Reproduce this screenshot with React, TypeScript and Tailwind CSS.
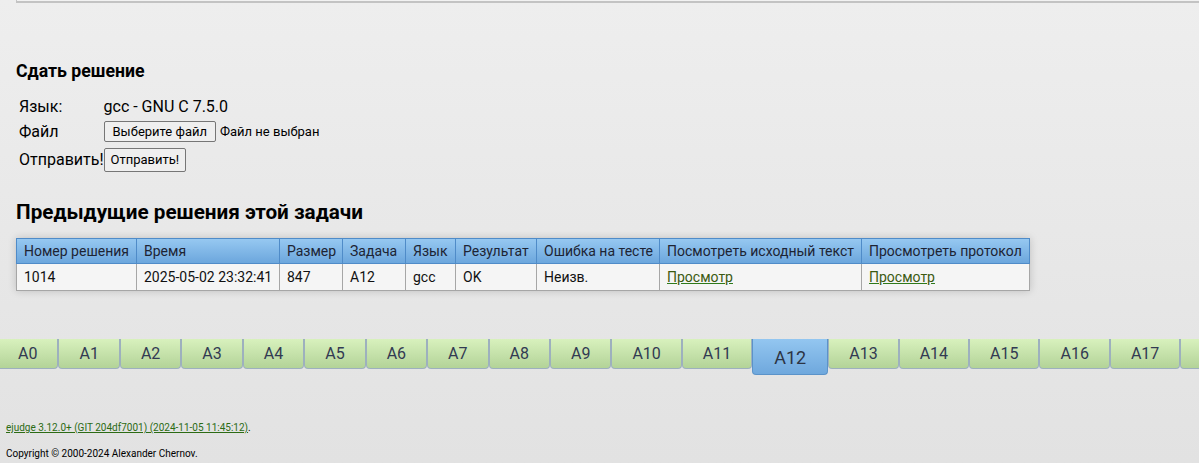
const cols = [
  { title: "Номер решения", w: "w-[120px]", value: "1014" },
  { title: "Время", w: "w-[143px]", value: "2025-05-02 23:32:41" },
  { title: "Размер", w: "w-[63px]", value: "847" },
  { title: "Задача", w: "w-[63px]", value: "A12" },
  { title: "Язык", w: "w-[50px]", value: "gcc" },
  { title: "Результат", w: "w-[81px]", value: "OK" },
  { title: "Ошибка на тесте", w: "w-[123px]", value: "Неизв." },
  { title: "Посмотреть исходный текст", w: "w-[202px]", value: "Просмотр", link: true },
  { title: "Просмотреть протокол", w: "w-[168px]", value: "Просмотр", link: true },
];

const problems = Array.from({ length: 19 }, (_, i) => `A${i}`);

function ProblemTabs() {
  return (
    <div className="flex w-full overflow-hidden whitespace-nowrap">
      <div className="ml-[-3px] flex items-start">
        {problems.map((p) =>
          p === "A12" ? (
            <div
              key={p}
              className="flex h-[36px] items-center rounded-b-[4px] border border-t-0 border-[#5b93c9] bg-gradient-to-b from-[#93c6f0] to-[#6fa8dd] px-[21px] pt-[2px] text-[18px] text-[#2d3444]"
            >
              {p}
            </div>
          ) : (
            <div
              key={p}
              className="flex h-[30px] items-center rounded-b-[4px] border border-t-0 border-[#9db0be] bg-gradient-to-b from-[#d8f1bd] to-[#b3d398] px-[20px] text-[16px] text-[#323a52]"
            >
              {p}
            </div>
          )
        )}
      </div>
    </div>
  );
}

export default function App() {
  return (
    <div className="h-[463px] w-full overflow-hidden bg-gradient-to-b from-[#eeeeee] to-[#e2e2e2] font-['Roboto',sans-serif] text-black">
      <div className="ml-4 h-[3px] border-b-2 border-l border-[#c3c3c3] bg-[#f2f2f2]" />

      <div className="px-4">
        <h3 className="mt-[58px] text-[17.7px] leading-[21px] font-bold">Сдать решение</h3>

        <table className="mt-[12px] border-separate border-spacing-x-0 border-spacing-y-[2px] text-[16px] leading-[19px]">
          <tbody>
            <tr className="h-[21px]">
              <td className="py-px pl-[3px]">Язык:</td>
              <td className="py-px">gcc - GNU C 7.5.0</td>
            </tr>
            <tr className="h-[25px]">
              <td className="py-px pl-[3px]">Файл</td>
              <td className="py-px">
                <div className="flex items-center gap-[4px]">
                  <button className="h-[21px] rounded-[2px] border border-[#767676] bg-[#efefef] px-[8px] text-[13px] leading-none">
                    Выберите файл
                  </button>
                  <span className="text-[13px]">Файл не выбран</span>
                </div>
              </td>
            </tr>
            <tr className="h-[27px]">
              <td className="py-px pl-[3px]">Отправить!</td>
              <td className="p-0">
                <button className="h-[24px] rounded-[2px] border border-[#767676] bg-[#efefef] px-[6px] text-[13px] leading-none">
                  Отправить!
                </button>
              </td>
            </tr>
          </tbody>
        </table>

        <h2 className="mt-[25px] text-[20.7px] leading-[24px] font-bold">Предыдущие решения этой задачи</h2>

        <table className="mt-[14px] w-[1013px] table-fixed border-collapse text-[14px] shadow-[0_0_8px_rgba(0,0,0,0.18)]">
          <thead>
            <tr className="h-[25px] bg-gradient-to-b from-[#96c8f1] to-[#6aa5dc]">
              {cols.map((c) => (
                <th
                  key={c.title}
                  className={`${c.w} overflow-hidden border border-[#4f8bc8] px-[7px] text-left font-normal whitespace-nowrap text-[#1d2434]`}
                >
                  {c.title}
                </th>
              ))}
            </tr>
          </thead>
          <tbody>
            <tr className="h-[27px] bg-[#f5f5f5]">
              {cols.map((c) => (
                <td key={c.title} className="border border-[#a6a6a6] px-[7px] whitespace-nowrap text-[#111]">
                  {c.link ? (
                    <a href="#" className="text-[#3c5a12] underline decoration-[#2e7a1a]">
                      {c.value}
                    </a>
                  ) : (
                    c.value
                  )}
                </td>
              ))}
            </tr>
          </tbody>
        </table>
      </div>

      <div className="mt-[48px]">
        <ProblemTabs />
      </div>

      <div className="mt-[47px] px-[6px] text-[10px] leading-[12px]">
        <p>
          <a href="#" className="text-[#2c6b14] underline">
            ejudge 3.12.0+ (GIT 204df7001) (2024-11-05 11:45:12)
          </a>
          .
        </p>
        <p className="mt-[14px]">Copyright © 2000-2024 Alexander Chernov.</p>
      </div>
    </div>
  );
}
